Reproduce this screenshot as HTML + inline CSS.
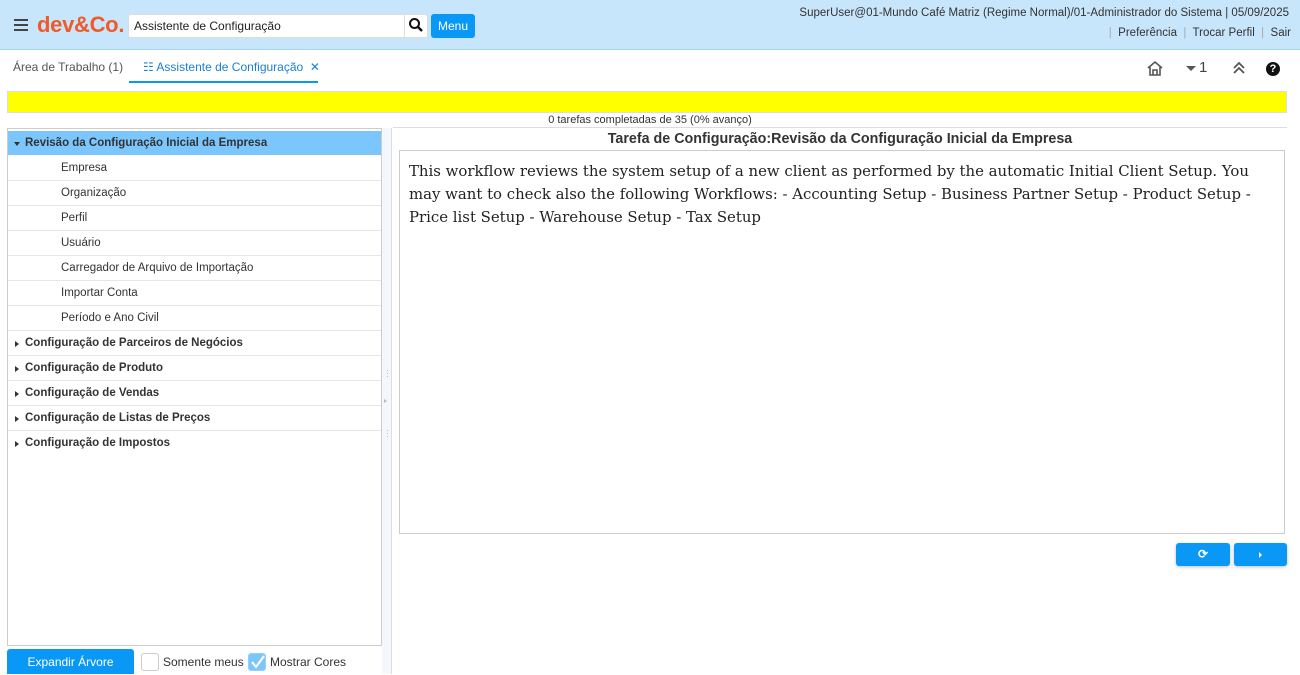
<!DOCTYPE html>
<html><head><meta charset="utf-8"><style>
*{box-sizing:border-box;margin:0;padding:0}
body{width:1300px;height:674px;overflow:hidden;background:#fff;font-family:"Liberation Sans",sans-serif;color:#333;position:relative}
.a{position:absolute}
#hdr{left:0;top:0;width:1300px;height:50px;background:#c7e5fb;border-bottom:1px solid #a9d6f7}
.row{position:absolute;left:8px;width:373px;height:25px;border-bottom:1px solid #e6e6e6;font-size:11.5px;line-height:25px;white-space:nowrap}
.b{font-weight:bold;padding-left:17px}
.c{padding-left:53px}
.tri{position:absolute;left:7px;top:10px;width:0;height:0;border-top:3px solid transparent;border-bottom:3px solid transparent;border-left:4px solid #333}
</style></head><body>
<div id="hdr" class="a">
 <div class="a" style="left:14px;top:19px;width:14px;height:2px;background:#444;box-shadow:0 5px 0 #444,0 10px 0 #444"></div>
 <div class="a" style="left:37px;top:12px;font-size:22px;font-weight:bold;color:#f05a28;letter-spacing:-0.3px">dev&amp;Co.</div>
 <div class="a" style="left:128px;top:14px;width:300px;height:24px;background:#fff;border:1px solid #ddd;border-radius:3px;font-size:12px;line-height:22px;padding-left:5px;color:#222">Assistente de Configuração</div>
 <div class="a" style="left:404px;top:15px;width:1px;height:22px;background:#ddd"></div>
 <svg class="a" style="left:408px;top:17px" width="16" height="16" viewBox="0 0 16 16"><circle cx="6.5" cy="6.5" r="4.5" fill="none" stroke="#111" stroke-width="2"/><path d="M10 10l4 4" stroke="#111" stroke-width="2.5"/></svg>
 <div class="a" style="left:431px;top:14px;width:44px;height:24px;background:#0a98f7;border-radius:3px;color:#fff;font-size:12px;line-height:24px;text-align:center">Menu</div>
 <div class="a" style="right:11px;top:7px;font-size:11.5px;color:#333">SuperUser@01-Mundo Café Matriz (Regime Normal)/01-Administrador do Sistema | 05/09/2025</div>
 <div class="a" style="right:9px;top:27px;font-size:11.5px;color:#333"><span style="color:#aaa">|</span>&nbsp; Preferência &nbsp;<span style="color:#aaa">|</span>&nbsp; Trocar Perfil &nbsp;<span style="color:#aaa">|</span>&nbsp; Sair</div>
</div>
<div class="a" style="left:13px;top:60px;font-size:12px;color:#555">Área de Trabalho (1)</div>
<div class="a" style="left:143px;top:60px;font-size:12px;color:#1a7fd8">☷ Assistente de Configuração &nbsp;✕</div>
<div class="a" style="left:129px;top:81px;width:189px;height:2px;background:#0a98f7"></div>
<svg class="a" style="left:1146px;top:60px" width="18" height="17" viewBox="0 0 18 17"><path d="M2 8L9 2l7 6M4 7v8h10V7M7 15v-5h4v5" fill="none" stroke="#555" stroke-width="1.6"/></svg>
<div class="a" style="left:1186px;top:66px;border-left:5px solid transparent;border-right:5px solid transparent;border-top:5px solid #555"></div>
<div class="a" style="left:1199px;top:59px;font-size:15px;color:#444">1</div>
<svg class="a" style="left:1232px;top:61px" width="14" height="14" viewBox="0 0 14 14"><path d="M2 7l5-5 5 5M2 12l5-5 5 5" fill="none" stroke="#555" stroke-width="1.8"/></svg>
<div class="a" style="left:1266px;top:62px;width:14px;height:14px;border-radius:7px;background:#111;color:#fff;font-size:11px;font-weight:bold;text-align:center;line-height:14px">?</div>
<div class="a" style="left:7px;top:91px;width:1280px;height:22px;background:#ffff00;border:1px solid #ddd"></div>
<div class="a" style="left:0;top:114px;width:1300px;text-align:center;font-size:11px;color:#333">0 tarefas completadas de 35 (0% avanço)</div>
<div class="a" style="left:7px;top:128px;width:375px;height:518px;border:1px solid #ccc"></div>
<div class="a" style="left:8px;top:131px;width:373px;height:24px;background:#7cc6fe"></div>
<div class="row b" style="top:131px;border:none"><span class="a" style="left:6px;top:11px;border-left:3px solid transparent;border-right:3px solid transparent;border-top:4px solid #333"></span>Revisão da Configuração Inicial da Empresa</div>
<div class="row c" style="top:156px">Empresa</div>
<div class="row c" style="top:181px">Organização</div>
<div class="row c" style="top:206px">Perfil</div>
<div class="row c" style="top:231px">Usuário</div>
<div class="row c" style="top:256px">Carregador de Arquivo de Importação</div>
<div class="row c" style="top:281px">Importar Conta</div>
<div class="row c" style="top:306px">Período e Ano Civil</div>
<div class="row b" style="top:331px"><span class="tri"></span>Configuração de Parceiros de Negócios</div>
<div class="row b" style="top:356px"><span class="tri"></span>Configuração de Produto</div>
<div class="row b" style="top:381px"><span class="tri"></span>Configuração de Vendas</div>
<div class="row b" style="top:406px"><span class="tri"></span>Configuração de Listas de Preços</div>
<div class="row b" style="top:431px;border:none"><span class="tri"></span>Configuração de Impostos</div>
<div class="a" style="left:382px;top:128px;width:10px;height:546px;background:#f4f8fc;border-right:1px solid #ddd"></div>
<div class="a" style="left:386px;top:369px;font-size:8px;color:#aaa;line-height:3px">·<br>·<br>·</div>
<div class="a" style="left:384px;top:399px;border-top:2px solid transparent;border-bottom:2px solid transparent;border-left:3px solid #bbb"></div>
<div class="a" style="left:386px;top:429px;font-size:8px;color:#aaa;line-height:3px">·<br>·<br>·</div>
<div class="a" style="left:393px;top:127px;width:894px;height:1px;background:#ddd"></div>
<div class="a" style="left:393px;top:131px;width:894px;text-align:center;font-size:14.3px;font-weight:bold;color:#333">Tarefa de Configuração:Revisão da Configuração Inicial da Empresa</div>
<div class="a" style="left:399px;top:150px;width:886px;height:384px;border:1px solid #ccc;padding:9px 9px;font-family:'DejaVu Serif',serif;font-size:14.9px;line-height:23px;color:#222;white-space:nowrap;overflow:hidden">This workflow reviews the system setup of a new client as performed by the automatic Initial Client Setup. You<br>may want to check also the following Workflows: - Accounting Setup - Business Partner Setup - Product Setup -<br>Price list Setup - Warehouse Setup - Tax Setup</div>
<div class="a" style="left:1176px;top:543px;width:54px;height:23px;background:#0a98f7;border-radius:3px;box-shadow:0 1px 3px rgba(0,0,0,.25);color:#fff;font-size:12px;text-align:center;line-height:23px;font-weight:bold">⟳</div>
<div class="a" style="left:1234px;top:543px;width:53px;height:23px;background:#0a98f7;border-radius:3px;box-shadow:0 1px 3px rgba(0,0,0,.25)"><span class="a" style="left:25px;top:9px;border-top:3px solid transparent;border-bottom:3px solid transparent;border-left:3px solid #fff"></span></div>
<div class="a" style="left:7px;top:649px;width:127px;height:25px;background:#0a98f7;border-radius:3px 3px 0 0;color:#fff;font-size:12px;line-height:26px;text-align:center">Expandir Árvore</div>
<div class="a" style="left:141px;top:653px;width:18px;height:18px;border:1px solid #ccc;border-radius:3px"></div>
<div class="a" style="left:163px;top:655px;font-size:12px;color:#333">Somente meus</div>
<div class="a" style="left:248px;top:653px;width:18px;height:18px;background:#7cc6fe;border:1px solid #9ccff8;border-radius:3px"></div>
<svg class="a" style="left:249px;top:653px" width="18" height="18" viewBox="0 0 18 18"><path d="M3 9l4 5 8-11" fill="none" stroke="#fff" stroke-width="2"/></svg>
<div class="a" style="left:270px;top:655px;font-size:12px;color:#333">Mostrar Cores</div>
</body></html>
